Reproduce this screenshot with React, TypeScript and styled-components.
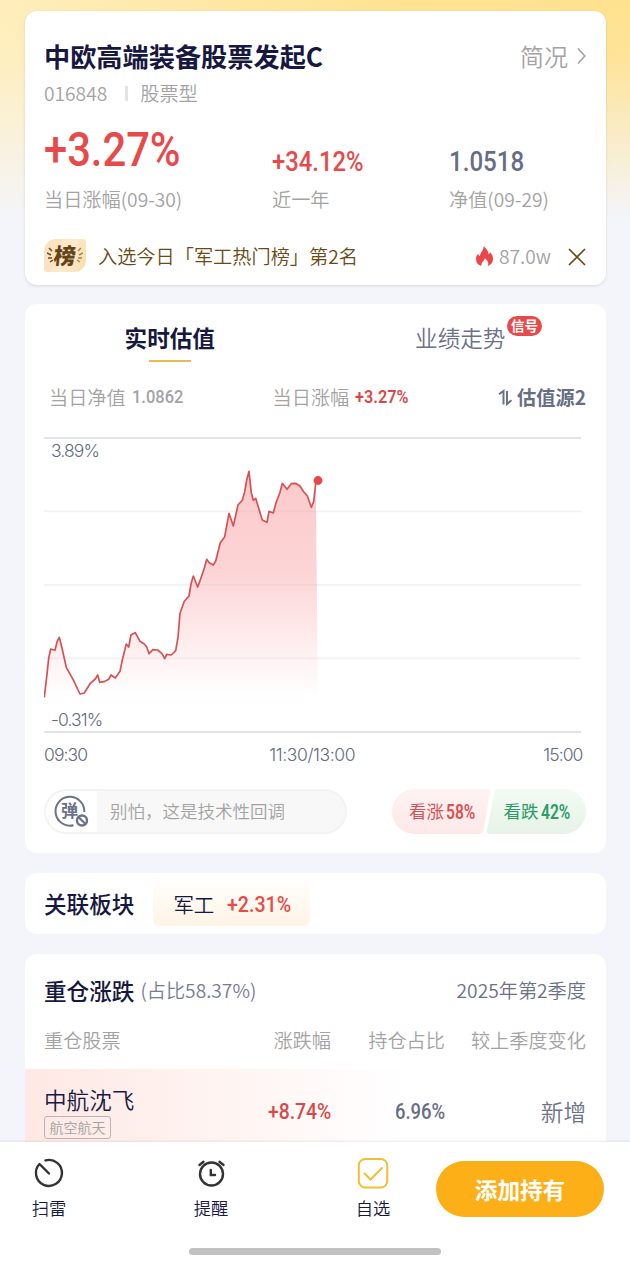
import styled, { createGlobalStyle } from 'styled-components';

const GlobalStyle = createGlobalStyle`
  * {
    box-sizing: border-box;
  }

  body {
    margin: 0;
    background: #f4f5fa;
    font-family: 'Noto Sans CJK SC', 'Noto Sans', sans-serif;
    font-weight: 350;
    color: #17183f;
  }
`;

const Page = styled.div`
  width: 630px;
  height: 1268px;
  overflow: hidden;
  display: flex;
  flex-direction: column;
  background:
    linear-gradient(to bottom, rgba(244, 245, 250, 0) 0, rgba(244, 245, 250, 0.1) 60px, #f4f5fa 218px),
    linear-gradient(100deg, #ffeebb 0, #ffe393 45%, #ffe08a 100%);
`;

const Feed = styled.main`
  flex: 1;
  min-height: 0;
  overflow: hidden;
  display: flex;
  flex-direction: column;
  gap: 19.5px;
  padding: 11px 24.5px 0;
`;

const Card = styled.section<{ $height: number; $raised?: boolean }>`
  flex: none;
  height: ${(p) => p.$height}px;
  border-radius: 12px;
  background: #fff;
  overflow: hidden;
  box-shadow: ${(p) => (p.$raised ? '0 1px 3px rgba(60, 60, 90, 0.16)' : 'none')};
`;

const Row = styled.div<{ $height: number; $top?: number }>`
  display: flex;
  align-items: center;
  justify-content: space-between;
  height: ${(p) => p.$height}px;
  margin-top: ${(p) => p.$top ?? 0}px;
  padding: 0 19.5px;
  white-space: nowrap;
`;

const Text = styled.span<{ $size?: number; $color?: string; $weight?: number }>`
  font-size: ${(p) => p.$size ?? 19.2}px;
  font-weight: ${(p) => p.$weight ?? 350};
  line-height: 1.4;
  color: ${(p) => p.$color ?? '#a3a3a3'};
  white-space: nowrap;
`;

const HeatText = styled(Text)`
  margin: 0 17px 0 5px;
`;

const SourceText = styled(Text)`
  margin-left: 4px;
`;

const ShareText = styled(Text)`
  margin-left: 6px;
`;

// Condensed figures: the box keeps the squeezed width
const Figure = styled.span<{ $size: number; $width: number; $squeeze: number; $color?: string; $weight?: number }>`
  display: inline-block;
  width: ${(p) => p.$width}px;
  font-family: Roboto, sans-serif;
  font-size: ${(p) => p.$size}px;
  font-weight: ${(p) => p.$weight ?? 500};
  line-height: 1;
  white-space: nowrap;
  color: ${(p) => p.$color ?? '#e64a4a'};
  transform: scaleX(${(p) => p.$squeeze});
  transform-origin: left center;
`;

const TitleLink = styled.div`
  display: flex;
  align-items: center;
  gap: 9px;
`;

const Divider = styled.i`
  width: 3px;
  height: 15px;
  margin: 0 12px 0 18px;
  background: #e4e4e4;
`;

const Meta = styled.div`
  display: flex;
  align-items: center;
  height: 28px;
  margin-top: 6px;
  padding-left: 19.5px;
`;

const Stats = styled.div`
  display: grid;
  grid-template-columns: 228px 177px 1fr;
  padding: 0 19.5px;
  margin-top: 15px;
`;

const Stat = styled.div`
  display: flex;
  flex-direction: column;
`;

const StatValue = styled.div<{ $lift?: number }>`
  display: flex;
  align-items: flex-end;
  height: 54px;
  padding-bottom: ${(p) => p.$lift ?? 0}px;
  margin-bottom: 10px;
`;

const RankBadge = styled.div`
  display: flex;
  align-items: center;
  justify-content: center;
  width: 42px;
  height: 33px;
  margin: -3px 12px 0 0;
  border-radius: 12px 3px 12px 3px;
  background: linear-gradient(110deg, #fae3c0 0 35%, #ffe9c8 36% 60%, #fcdca8 100%);
`;

const RankGlyph = styled.span`
  font-size: 22px;
  font-weight: 900;
  line-height: 1;
  color: #644319;
  transform: translateY(-1px) skewX(-6deg);
`;

const Inline = styled.div`
  display: flex;
  align-items: center;
`;

const Tabs = styled.div`
  display: grid;
  grid-template-columns: 1fr 1fr;
  height: 68px;
  padding-top: 18px;
`;

const Tab = styled.div<{ $active?: boolean }>`
  position: relative;
  justify-self: center;
  height: 40px;
  font-size: 22.6px;
  line-height: 32px;
  font-weight: ${(p) => (p.$active ? 700 : 350)};
  color: ${(p) => (p.$active ? '#17183f' : '#6b7288')};

  &::after {
    content: '';
    display: ${(p) => (p.$active ? 'block' : 'none')};
    width: 42px;
    height: 2px;
    margin: 5.5px auto 0;
    background: #eabb55;
  }
`;

const SignalBadge = styled.span`
  position: absolute;
  left: 92px;
  top: -6px;
  width: 35px;
  height: 20px;
  border-radius: 10px;
  background: #e8494b;
  color: #fff;
  font-size: 13.5px;
  font-weight: 700;
  line-height: 19px;
  text-align: center;
`;

const QuoteRow = styled.div`
  display: grid;
  grid-template-columns: 223.5px 1fr auto;
  align-items: center;
  height: 30px;
  margin-top: 10px;
  padding: 0 19.5px 0 24.5px;
`;

const QuotePair = styled.div`
  display: flex;
  align-items: center;
  gap: 6px;
`;

const ChartBox = styled.div`
  position: relative;
  width: 537px;
  height: 297px;
  margin: 25px 0 0 19.5px;
`;

const AxisText = styled.span`
  font-family: Inter, sans-serif;
  font-size: 17.5px;
  font-weight: 300;
  letter-spacing: -0.9px;
  line-height: 20px;
  color: #646b80;
`;

const MiddayText = styled(AxisText)`
  letter-spacing: -0.4px;
  margin-right: 6px;
`;

const ChartLabel = styled(AxisText)<{ $top: number }>`
  position: absolute;
  left: 7px;
  top: ${(p) => p.$top}px;
`;

const TimeAxis = styled.div`
  display: flex;
  align-items: center;
  justify-content: space-between;
  height: 40px;
  margin-top: 1px;
  padding: 0 23px 0 19.5px;
`;

const Danmu = styled.div`
  display: flex;
  align-items: center;
  width: 303px;
  height: 45px;
  border: 2px solid #f3f3f3;
  border-radius: 23px;
  background: #f8f8f8;
  overflow: hidden;
`;

const DanmuToggle = styled.div`
  display: flex;
  align-items: center;
  width: 51px;
  height: 41px;
  margin-right: 13px;
  padding-left: 7px;
  background: #fff;
`;

const DanmuIcon = styled.div`
  position: relative;
  width: 36px;
  height: 34px;
  color: #6b7288;

  svg {
    position: absolute;
    inset: 0;
  }
`;

const DanmuGlyph = styled.span`
  position: absolute;
  left: 8px;
  top: 6px;
  font-size: 17px;
  font-weight: 700;
  line-height: 17px;
`;

const Votes = styled.div`
  position: relative;
  display: flex;
  width: 194px;
  height: 45px;

  svg {
    position: absolute;
    inset: 0;
  }
`;

const Vote = styled.div<{ $left: number }>`
  position: relative;
  display: flex;
  align-items: center;
  width: 95px;
  padding-left: ${(p) => p.$left}px;
  gap: 2px;
`;

const SectorRow = styled.div`
  display: flex;
  align-items: center;
  height: 100%;
  padding: 2px 0 0 19.5px;
  gap: 19px;
`;

const SectorChip = styled.div`
  display: flex;
  align-items: center;
  gap: 13px;
  width: 157px;
  height: 44px;
  padding-left: 20px;
  border-radius: 6px;
  background: linear-gradient(#fffefc, #fff4e4);
`;

const HoldingGrid = styled.div<{ $height: number; $top: number; $tinted?: boolean }>`
  display: grid;
  grid-template-columns: 187px 100px 114px 1fr;
  align-items: center;
  justify-items: end;
  height: ${(p) => p.$height}px;
  margin-top: ${(p) => p.$top}px;
  padding: 0 19.5px;
  background: ${(p) => (p.$tinted ? 'linear-gradient(to right, #fee8e4, #fff 66%)' : 'none')};

  > :first-child {
    justify-self: start;
  }
`;

const StockName = styled.div`
  display: flex;
  flex-direction: column;
  align-items: flex-start;
  gap: 1px;
`;

const StockTag = styled.span`
  width: 67px;
  height: 23px;
  border: 1px solid #b9b3b3;
  border-radius: 3px;
  font-size: 14px;
  line-height: 21px;
  text-align: center;
  color: #a3a3a3;
`;

const BottomBar = styled.footer`
  flex: none;
  height: 126px;
  background: #fff;
  box-shadow: 0 -1px 2px rgba(60, 60, 90, 0.1);
  position: relative;
`;

const Actions = styled.div`
  display: flex;
  height: 100px;
  padding: 15px 0 0 16px;
`;

const Action = styled.div`
  display: flex;
  flex-direction: column;
  align-items: center;
  width: 66px;
  margin-right: 96px;
  font-size: 17.3px;
  line-height: 24px;

  &:nth-child(3) {
    margin-right: 30px;
  }

  svg {
    margin-bottom: 7px;
  }
`;

const AddButton = styled.button`
  width: 168px;
  height: 56px;
  margin-top: 4px;
  padding: 0;
  border: 0;
  border-radius: 28px;
  background: #fcaf17;
  color: #fff;
  font-family: inherit;
  font-size: 22.6px;
  font-weight: 700;
`;

const HomeIndicator = styled.div`
  width: 252px;
  height: 7px;
  margin: 6px auto 0;
  border-radius: 4px;
  background: #c1c1c1;
`;

// Intraday estimate, in thirds of a pixel
const points: [number, number][] = [
  [43, 742], [50, 680], [56, 625], [62, 597], [75, 601], [82, 573], [88, 562], [95, 590], [109, 652],
  [129, 688], [150, 732], [163, 729], [181, 700], [196, 687], [203, 675], [209, 697], [222, 695],
  [236, 688], [243, 675], [256, 684], [270, 664], [276, 634], [289, 582], [296, 591], [303, 554],
  [316, 548], [330, 574], [343, 582], [350, 591], [357, 611], [369, 599], [383, 600], [396, 611],
  [404, 626], [410, 613], [424, 615], [437, 602], [444, 562], [450, 490], [463, 454], [477, 438],
  [483, 402], [490, 378], [503, 411], [515, 378], [523, 355], [530, 328], [538, 338], [550, 345],
  [557, 333], [571, 278], [584, 260], [597, 190], [610, 228], [624, 165], [637, 151], [644, 125],
  [650, 90], [657, 64], [664, 128], [670, 151], [677, 145], [697, 210], [711, 217], [717, 184],
  [730, 189], [738, 158], [750, 127], [757, 100], [771, 118], [784, 101], [797, 100], [810, 108],
  [820, 124], [832, 138], [844, 172], [851, 155], [857, 100],
];

const line = points
  .map(([x, y]) => `${(x / 3 - 14).toFixed(1)},${(y / 3 + 13).toFixed(1)}`)
  .join(' L');

function EstimateChart() {
  return (
    <ChartBox>
      <svg width="537" height="297" viewBox="0 0 537 297" fill="none">
        <defs>
          <linearGradient id="area" x1="0" y1="34" x2="0" y2="262" gradientUnits="userSpaceOnUse">
            <stop offset="0" stopColor="#f99b9e" stopOpacity="0.54" />
            <stop offset="0.45" stopColor="#f99fa1" stopOpacity="0.44" />
            <stop offset="1" stopColor="#fba8aa" stopOpacity="0" />
          </linearGradient>
        </defs>
        <path d="M0 1H537M0 295H537" stroke="#e2e4e7" strokeWidth="1.8" />
        <path d="M0 74.3H537M0 147.8H537M0 221.3H537" stroke="#f1f2f4" strokeWidth="1.8" />
        <path d={`M${line} L274,260 L0,260Z`} fill="url(#area)" />
        <path d={`M${line}`} stroke="#d65355" strokeWidth="1.7" strokeLinejoin="round" />
        <circle cx="274" cy="43.5" r="4.4" fill="#ec4447" />
      </svg>
      <ChartLabel $top={4}>3.89%</ChartLabel>
      <ChartLabel $top={273}>-0.31%</ChartLabel>
    </ChartBox>
  );
}

function SummaryCard() {
  return (
    <Card $height={273.5} $raised>
      <Row $height={34} $top={28}>
        <Text $size={26.2} $weight={700} $color="#17183f">中欧高端装备股票发起C</Text>
        <TitleLink>
          <Text $size={24}>简况</Text>
          <svg width="9" height="18" viewBox="0 0 9 18" fill="none" stroke="#a3a3a3" strokeWidth="1.6">
            <path d="M1 1.5L7.8 9L1 16.5" />
          </svg>
        </TitleLink>
      </Row>
      <Meta>
        <Text>016848</Text>
        <Divider />
        <Text>股票型</Text>
      </Meta>
      <Stats>
        <Stat>
          <StatValue $lift={2}>
            <Figure $size={48.5} $width={136} $squeeze={0.86}>+3.27%</Figure>
          </StatValue>
          <Text>当日涨幅(09-30)</Text>
        </Stat>
        <Stat>
          <StatValue>
            <Figure $size={28} $width={91} $squeeze={0.85}>+34.12%</Figure>
          </StatValue>
          <Text>近一年</Text>
        </Stat>
        <Stat>
          <StatValue>
            <Figure $size={28} $width={74} $squeeze={0.86} $color="#666e86">1.0518</Figure>
          </StatValue>
          <Text>净值(09-29)</Text>
        </Stat>
      </Stats>
      <Row $height={34} $top={27}>
        <Inline>
          <RankBadge>
            <svg width="7" height="16" viewBox="0 0 7 16" stroke="#6a4a22" strokeWidth="1.5">
              <path d="M2 1l3 3M0 6l4 2M1 11l4 0M3 15l3-2" />
            </svg>
            <RankGlyph>榜</RankGlyph>
            <svg width="7" height="16" viewBox="0 0 7 16" stroke="#a88350" strokeWidth="1.5">
              <path d="M5 1l-3 3M7 6l-4 2M6 11l-4 0M4 15l-3-2" />
            </svg>
          </RankBadge>
          <Text $color="#6b4a14">入选今日「军工热门榜」第2名</Text>
        </Inline>
        <Inline>
          <svg width="19" height="21" viewBox="0 0 19 21" fill="#ec4649">
            <path d="M8.7 0C10.2 2 13.8 4.8 13.6 8.5C14.6 8 14.9 6.8 14.9 6C17 8 18 10.4 18 12.7C18 16.4 15.8 19 12.8 20C14.2 16.6 12.3 14.3 9.8 12.3C9.8 14.4 6.1 16 6.5 20C3 19 1 16.4 1 13C1 10.6 2.1 8.9 3.1 7.7C3.4 9 4 9.8 5 10C4.9 6.6 8.8 4.4 8.7 0Z" />
          </svg>
          <HeatText>87.0w</HeatText>
          <svg width="18" height="18" viewBox="0 0 18 18" stroke="#6b4a14" strokeWidth="1.7">
            <path d="M1 1L17 17M17 1L1 17" />
          </svg>
        </Inline>
      </Row>
    </Card>
  );
}

function EstimateCard() {
  return (
    <Card $height={549}>
      <Tabs>
        <Tab $active>实时估值</Tab>
        <Tab>
          业绩走势
          <SignalBadge>信号</SignalBadge>
        </Tab>
      </Tabs>
      <QuoteRow>
        <QuotePair>
          <Text>当日净值</Text>
          <Figure $size={18.5} $width={51} $squeeze={0.89} $color="#a3a3a3">1.0862</Figure>
        </QuotePair>
        <QuotePair>
          <Text>当日涨幅</Text>
          <Figure $size={18.5} $width={54} $squeeze={0.88} $weight={600} $color="#d84a4a">+3.27%</Figure>
        </QuotePair>
        <Inline>
          <svg width="15" height="19" viewBox="0 0 15 19" fill="none" stroke="#6b7288" strokeWidth="2">
            <path d="M1 6.2L5.5 3V16.5M9 3V16L13.5 12.2" />
          </svg>
          <SourceText $weight={700} $color="#666e86">估值源2</SourceText>
        </Inline>
      </QuoteRow>
      <EstimateChart />
      <TimeAxis>
        <AxisText>09:30</AxisText>
        <MiddayText>11:30/13:00</MiddayText>
        <AxisText>15:00</AxisText>
      </TimeAxis>
      <Row $height={45} $top={14}>
        <Danmu>
          <DanmuToggle>
            <DanmuIcon>
              <svg width="36" height="34" viewBox="0 0 36 34" fill="none" stroke="currentColor" strokeWidth="2">
                <path d="M31.3 17A14.4 14.4 0 1 0 20.5 30.2" />
                <circle cx="29" cy="25.5" r="5" strokeWidth="2.4" />
                <path d="M25.5 22L32.5 29" strokeWidth="2.2" />
              </svg>
              <DanmuGlyph>弹</DanmuGlyph>
            </DanmuIcon>
          </DanmuToggle>
          <Text $size={17.5}>别怕，这是技术性回调</Text>
        </Danmu>
        <Votes>
          <svg width="194" height="45" viewBox="0 0 195 45" preserveAspectRatio="none">
            <defs>
              <linearGradient id="up" x1="0" y1="0" x2="0" y2="1">
                <stop stopColor="#fff2f2" />
                <stop offset="1" stopColor="#fde8e9" />
              </linearGradient>
              <linearGradient id="down" x1="0" y1="0" x2="0" y2="1">
                <stop stopColor="#f2faf4" />
                <stop offset="1" stopColor="#e6f3e8" />
              </linearGradient>
            </defs>
            <path d="M22.5 0H96Q99 0 98.5 3L92 41Q91 45 87 45H22.5A22.5 22.5 0 0 1 22.5 0Z" fill="url(#up)" />
            <path d="M107 0H172.5A22.5 22.5 0 0 1 172.5 45H98Q94.5 45 95.5 41L103 3Q104 0 107 0Z" fill="url(#down)" />
          </svg>
          <Vote $left={17}>
            <Text $size={17.5} $weight={400} $color="#d65355">看涨</Text>
            <Figure $size={20} $width={30} $squeeze={0.78} $weight={600} $color="#d65355">58%</Figure>
          </Vote>
          <Vote $left={16.5}>
            <Text $size={17.5} $weight={400} $color="#2b9c66">看跌</Text>
            <Figure $size={20} $width={30} $squeeze={0.78} $weight={600} $color="#2b9c66">42%</Figure>
          </Vote>
        </Votes>
      </Row>
    </Card>
  );
}

function HoldingsCard() {
  return (
    <Card $height={260}>
      <Row $height={34} $top={20}>
        <Inline>
          <Text $size={22.6} $weight={500} $color="#17183f">重仓涨跌</Text>
          <ShareText $color="#777d90">(占比58.37%)</ShareText>
        </Inline>
        <Text $color="#6b7288">2025年第2季度</Text>
      </Row>
      <HoldingGrid $height={30} $top={18}>
        <Text>重仓股票</Text>
        <Text>涨跌幅</Text>
        <Text>持仓占比</Text>
        <Text>较上季度变化</Text>
      </HoldingGrid>
      <HoldingGrid $height={86} $top={13} $tinted>
        <StockName>
          <Text $size={22.6} $color="#17183f">中航沈飞</Text>
          <StockTag>航空航天</StockTag>
        </StockName>
        <Figure $size={22.5} $width={63} $squeeze={0.86} $color="#d84a4a">+8.74%</Figure>
        <Figure $size={22.5} $width={50} $squeeze={0.82} $color="#666e86">6.96%</Figure>
        <Text $size={22.6} $color="#6b7288">新增</Text>
      </HoldingGrid>
    </Card>
  );
}

export default function App() {
  return (
    <>
      <GlobalStyle />
      <Page>
        <Feed>
          <SummaryCard />
          <EstimateCard />
          <Card $height={61.5}>
            <SectorRow>
              <Text $size={22.6} $weight={500} $color="#17183f">关联板块</Text>
              <SectorChip>
                <Text $size={20.5} $color="#17183f">军工</Text>
                <Figure $size={22.5} $width={63} $squeeze={0.87}>+2.31%</Figure>
              </SectorChip>
            </SectorRow>
          </Card>
          <HoldingsCard />
        </Feed>
        <BottomBar>
          <Actions>
            <Action>
              <svg width="32" height="32" viewBox="0 0 32 32" fill="none" stroke="#333" strokeWidth="2.4">
                <path d="M12.5 3.4A13 13 0 1 1 6.5 7L16 16.5" strokeLinecap="round" strokeLinejoin="round" />
              </svg>
              扫雷
            </Action>
            <Action>
              <svg width="32" height="32" viewBox="0 0 32 32" fill="none" stroke="#333" strokeWidth="2.4" strokeLinecap="round">
                <circle cx="16.5" cy="17" r="11.5" />
                <path d="M15.8 13V18H20M4.5 8L8.5 4.8M28.5 8L24.5 4.8" />
              </svg>
              提醒
            </Action>
            <Action>
              <svg width="32" height="32" viewBox="0 0 32 32" fill="none" stroke="#f3bd35" strokeWidth="2">
                <rect x="1.8" y="2" width="28.5" height="28.5" rx="6.5" />
                <path d="M7.5 16.5L13.5 22.5L25 11" strokeLinecap="round" />
              </svg>
              自选
            </Action>
            <AddButton>添加持有</AddButton>
          </Actions>
          <HomeIndicator />
        </BottomBar>
      </Page>
    </>
  );
}
